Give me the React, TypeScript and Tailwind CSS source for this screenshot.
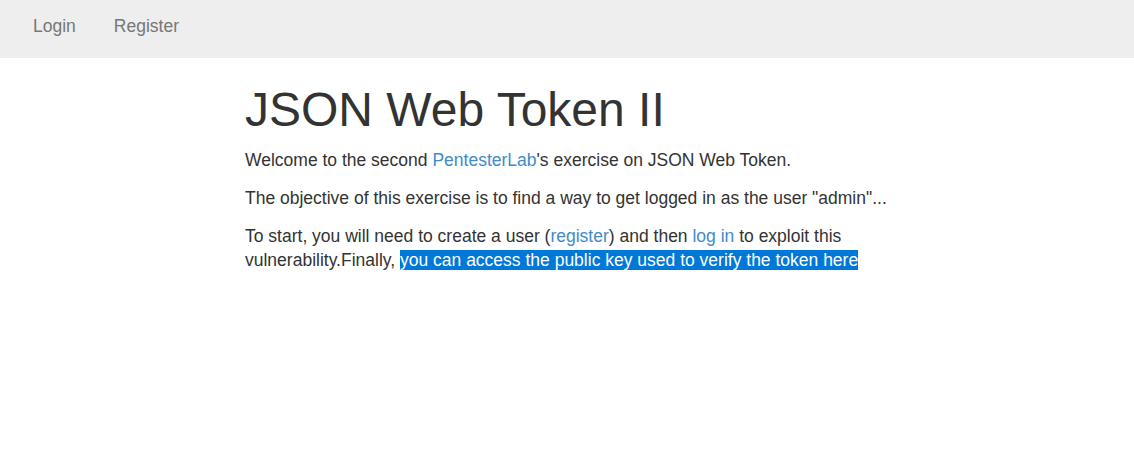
export default function App() {
  return (
    <div className="min-h-[468px] bg-white" style={{ fontFamily: '"Liberation Sans", Arial, sans-serif' }}>
      <nav className="h-[58px] bg-[#eeeeee] flex items-center pl-[18px]">
        <a className="px-[15px] text-[17.5px] text-[#777777] leading-[24px] mt-[-6px]">Login</a>
        <a className="px-[23px] text-[17.5px] text-[#777777] leading-[24px] mt-[-6px]">Register</a>
      </nav>
      <div className="ml-[245px] w-[660px] text-[#333333]">
        <h1 className="text-[48px] leading-[55px] mt-[24px] mb-[11px]">JSON Web Token II</h1>
        <p className="text-[17.5px] leading-[24px] mb-[14px]">
          Welcome to the second <a className="text-[#428bca]">PentesterLab</a>'s exercise on JSON Web Token.
        </p>
        <p className="text-[17.5px] leading-[24px] mb-[14px]">
          The objective of this exercise is to find a way to get logged in as the user "admin"...
        </p>
        <p className="text-[17.5px] leading-[24px] mb-[14px]">
          To start, you will need to create a user (<a className="text-[#428bca]">register</a>) and then{' '}
          <a className="text-[#428bca]">log in</a> to exploit this vulnerability.Finally,{' '}
          <span className="bg-[#0078d7] text-white">you can access the public key used to verify the token here</span>
        </p>
      </div>
    </div>
  );
}
